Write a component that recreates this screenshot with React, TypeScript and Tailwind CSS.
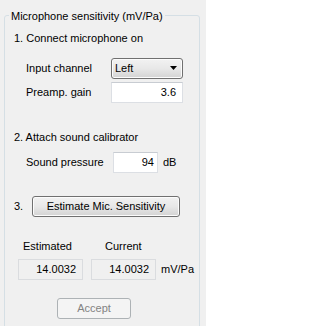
import React from "react";

const font = { fontFamily: '"Liberation Sans", Arial, sans-serif' };

export default function App() {
  return (
    <div
      className="w-[206px] h-[326px] overflow-hidden bg-[#f0f0f0] text-[11px] leading-[13px] text-black"
      style={font}
    >
      <div className="relative ml-[4px] mt-[15px] w-[196px] h-[330px] rounded-[3px] border border-[#d5dfe5]">
        <div className="absolute -top-[6px] left-[4px] bg-[#f0f0f0] px-[2px] leading-[13px]">
          Microphone sensitivity (mV/Pa)
        </div>

        <div className="flex flex-col">
          <div className="mt-[16px] pl-[9px]">1. Connect microphone on</div>

          <div className="mt-[13px] flex items-center pl-[21px]">
            <span className="w-[85px]">Input channel</span>
            <div className="relative flex h-[21px] w-[72px] items-center rounded-[3px] border border-[#707070] bg-gradient-to-b from-[#f2f2f2] via-[#e8e8e8] to-[#d3d3d3] pl-[3px] shadow-[inset_0_0_0_1px_#fcfcfc]">
              <span>Left</span>
              <svg className="absolute right-[5px] top-[7px]" width="7" height="4" viewBox="0 0 7 4">
                <path d="M0 0H7L3.5 4Z" fill="#000" />
              </svg>
            </div>
          </div>

          <div className="mt-[3px] flex items-center pl-[21px]">
            <span className="w-[85px]">Preamp. gain</span>
            <div className="flex h-[21px] w-[72px] items-center justify-end border border-[#dcdfe4] border-t-[#c8ccd2] bg-white pr-[6px]">
              3.6
            </div>
          </div>

          <div className="mt-[28px] pl-[9px]">2. Attach sound calibrator</div>

          <div className="mt-[8px] flex items-center pl-[21px]">
            <span className="w-[87px]">Sound pressure</span>
            <div className="flex h-[21px] w-[45px] items-center justify-end border border-[#dcdfe4] border-t-[#c8ccd2] bg-white pr-[3px]">
              94
            </div>
            <span className="ml-[5px]">dB</span>
          </div>

          <div className="mt-[23px] flex items-center pl-[9px]">
            <span className="w-[18px]">3.</span>
            <div className="flex h-[21px] w-[148px] items-center justify-center rounded-[3px] border border-[#707070] bg-gradient-to-b from-[#f2f2f2] via-[#e8e8e8] to-[#d3d3d3] shadow-[inset_0_0_0_1px_#fcfcfc]">
              Estimate Mic. Sensitivity
            </div>
          </div>

          <div className="mt-[23px] flex pl-[18px]">
            <span className="w-[82px]">Estimated</span>
            <span>Current</span>
          </div>

          <div className="mt-[6px] flex items-center pl-[13px]">
            <div className="flex h-[21px] w-[65px] items-center justify-end border border-[#dadcdf] bg-[#f0f0f0] pr-[6px]">
              14.0032
            </div>
            <div className="ml-[8px] flex h-[21px] w-[65px] items-center justify-end border border-[#dadcdf] bg-[#f0f0f0] pr-[6px]">
              14.0032
            </div>
            <span className="ml-[5px]">mV/Pa</span>
          </div>

          <div className="mt-[18px] pl-[52px]">
            <div className="flex h-[21px] w-[74px] items-center justify-center rounded-[3px] border border-[#adb2b5] bg-[#f4f4f4] text-[#838383]">
              Accept
            </div>
          </div>
        </div>
      </div>
    </div>
  );
}
